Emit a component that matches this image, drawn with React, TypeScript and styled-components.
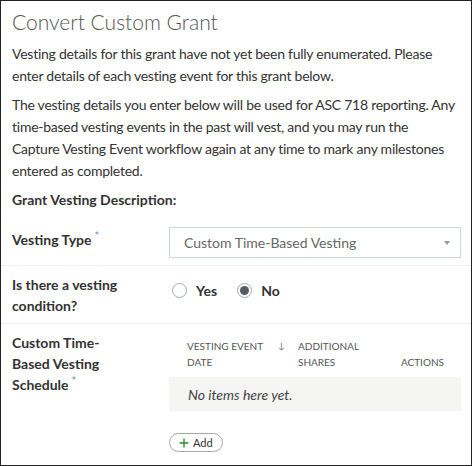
import React from 'react'
import styled, { createGlobalStyle } from 'styled-components'

const GlobalStyle = createGlobalStyle`
  * { box-sizing: border-box; }
  html, body { margin: 0; padding: 0; background: #fff; }
  body {
    font-family: Lato, 'Noto Sans', sans-serif;
    color: #333;
  }
`

const Panel = styled.div`
  width: 472px;
  height: 466px;
  border: 1px solid #222;
  padding: 6px 11px 0 11px;
  overflow: hidden;
`

const Title = styled.h1`
  font-size: 21px;
  font-weight: 300;
  color: #555;
  margin: 0 0 6px 0;
  line-height: 30px;
`

const Paragraph = styled.p`
  font-size: 14px;
  line-height: 22px;
  letter-spacing: -0.25px;
  margin: 0 0 7px 0;
`

const SectionTitle = styled.h2`
  font-size: 14px;
  font-weight: 700;
  line-height: 22px;
  margin: 0 0 10px 0;
`

const FormRow = styled.div<{ $last?: boolean }>`
  display: grid;
  grid-template-columns: 157px 1fr;
  margin: 0 -11px;
  padding: 6px 10px 7px 11px;
  border-bottom: ${p => (p.$last ? 'none' : '1px solid #eef0f2')};
`

const Label = styled.div<{ $narrow?: boolean }>`
  font-size: 14px;
  font-weight: 700;
  line-height: 21px;
  color: #333;
  max-width: ${p => (p.$narrow ? '110px' : '140px')};
  padding-top: 2px;
`

const Required = styled.sup`
  color: #4a9ad6;
  font-size: 11px;
  font-weight: 400;
  margin-left: 3px;
  line-height: 0;
  vertical-align: 5px;
`

const Select = styled.div`
  height: 31px;
  border: 1px solid #cfd4d6;
  display: flex;
  align-items: center;
  justify-content: space-between;
  padding: 0 10px 0 14px;
  font-size: 14px;
  color: #666;
`

const Caret = styled.span`
  width: 0;
  height: 0;
  border-left: 3px solid transparent;
  border-right: 3px solid transparent;
  border-top: 4px solid #999;
`

const RadioGroup = styled.div`
  display: flex;
  align-items: center;
  gap: 20px;
  height: 36px;
  padding-left: 3px;
  align-self: start;
`

const RadioOption = styled.label`
  display: flex;
  align-items: center;
  gap: 9px;
  font-size: 14px;
  font-weight: 700;
  color: #333;
`

const RadioCircle = styled.span<{ $checked?: boolean }>`
  width: 15px;
  height: 15px;
  border-radius: 50%;
  border: 1px solid #9aaeb0;
  display: flex;
  align-items: center;
  justify-content: center;
  &::after {
    content: '';
    width: 9px;
    height: 9px;
    border-radius: 50%;
    background: ${p => (p.$checked ? '#555b60' : 'transparent')};
  }
`

const TableWrap = styled.div`
  display: flex;
  flex-direction: column;
`

const TableHead = styled.div`
  display: grid;
  grid-template-columns: 91px 20px 1fr auto;
  padding: 8px 17px 0 18px;
  font-size: 10px;
  line-height: 16px;
  color: #555;
  text-transform: uppercase;
  align-items: end;
  height: 47px;
`

const HeadCell = styled.span<{ $wrap?: number }>`
  max-width: ${p => (p.$wrap ? `${p.$wrap}px` : 'none')};
  align-self: start;
`

const SortArrow = styled.span`
  align-self: start;
  font-size: 9px;
  color: #777;
`

const Actions = styled.span`
  text-align: right;
  padding-bottom: 7px;
`

const EmptyRow = styled.div`
  background: #f5f5f4;
  height: 34px;
  display: flex;
  align-items: center;
  padding-left: 19px;
  font-size: 14px;
  font-style: italic;
  color: #444;
`

const AddButton = styled.button`
  margin-top: 22px;
  align-self: flex-start;
  display: flex;
  align-items: center;
  gap: 4px;
  height: 19px;
  padding: 0 9px 0 9px;
  border: 1px solid #a9a9a9;
  border-radius: 10px;
  background: #fff;
  font-family: Lato, 'Noto Sans', sans-serif;
  font-size: 11px;
  color: #333;
`

const Plus = () => (
  <svg width="10" height="10" viewBox="0 0 10 10">
    <path d="M5 0.5v9M0.5 5h9" stroke="#2f8f2f" strokeWidth="1.4" />
  </svg>
)

export default function App() {
  return (
    <>
      <GlobalStyle />
      <Panel>
        <Title>Convert Custom Grant</Title>
        <Paragraph>
          Vesting details for this grant have not yet been fully enumerated. Please
          <br />
          enter details of each vesting event for this grant below.
        </Paragraph>
        <Paragraph>
          The vesting details you enter below will be used for ASC 718 reporting. Any
          <br />
          time-based vesting events in the past will vest, and you may run the
          <br />
          Capture Vesting Event workflow again at any time to mark any milestones
          <br />
          entered as completed.
        </Paragraph>
        <SectionTitle>Grant Vesting Description:</SectionTitle>

        <FormRow>
          <Label>
            Vesting Type<Required>*</Required>
          </Label>
          <Select>
            Custom Time-Based Vesting
            <Caret />
          </Select>
        </FormRow>

        <FormRow>
          <Label>Is there a vesting condition?</Label>
          <RadioGroup>
            <RadioOption>
              <RadioCircle />
              Yes
            </RadioOption>
            <RadioOption>
              <RadioCircle $checked />
              No
            </RadioOption>
          </RadioGroup>
        </FormRow>

        <FormRow $last>
          <Label $narrow>
            Custom Time-Based Vesting Schedule<Required>*</Required>
          </Label>
          <TableWrap>
            <TableHead>
              <HeadCell $wrap={88}>Vesting Event Date</HeadCell>
              <SortArrow>↓</SortArrow>
              <HeadCell $wrap={70}>Additional Shares</HeadCell>
              <Actions>Actions</Actions>
            </TableHead>
            <EmptyRow>No items here yet.</EmptyRow>
            <AddButton>
              <Plus />
              Add
            </AddButton>
          </TableWrap>
        </FormRow>
      </Panel>
    </>
  )
}
